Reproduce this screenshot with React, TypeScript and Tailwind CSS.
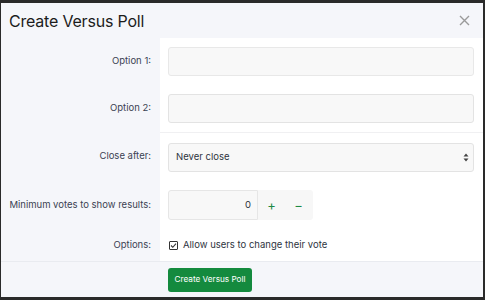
import React from "react";

const font = { fontFamily: "Inter, 'Noto Sans', sans-serif" };

function Label({ children }: { children: React.ReactNode }) {
  return (
    <div className="w-[159px] shrink-0 self-stretch flex items-center justify-end pr-[9px] text-[9.5px] text-[#3b4252] bg-[#f5f6fa]">
      {children}
    </div>
  );
}

export default function App() {
  return (
    <div className="w-[485px] h-[300px] bg-[#2a2a2a] pt-[3px] pl-[1px]" style={font}>
      <div className="w-[482px] h-[294px] bg-[#f5f6fa] flex flex-col">
        <div className="h-[35px] flex items-center justify-between pl-[8px] pr-[13px]">
          <div className="text-[16px] text-[#1c1c1c] tracking-[-0.2px]">Create Versus Poll</div>
          <svg width="11" height="11" viewBox="0 0 11 11" className="text-[#9a9a9a]">
            <path d="M1 1 L10 10 M10 1 L1 10" stroke="currentColor" strokeWidth="1.4" />
          </svg>
        </div>
        <div className="flex flex-col">
          <div className="flex h-[46px]">
            <Label>Option 1:</Label>
            <div className="flex-1 bg-white flex items-center pl-[8px] pr-[9px]">
              <div className="w-full h-[29px] rounded-[3px] border border-[#e8e8e8] bg-[#f8f8f8]" />
            </div>
          </div>
          <div className="flex h-[48px]">
            <Label>Option 2:</Label>
            <div className="flex-1 bg-white flex items-center pl-[8px] pr-[9px]">
              <div className="w-full h-[29px] rounded-[3px] border border-[#e3e3e3] bg-[#f8f8f8]" />
            </div>
          </div>
          <div className="flex h-[49px]">
            <Label>Close after:</Label>
            <div className="flex-1 bg-white flex items-center pl-[8px] pr-[9px] border-t border-[#f0f0f2]">
              <div className="w-full h-[29px] rounded-[3px] border border-[#e3e3e3] bg-[#f8f8f8] flex items-center justify-between pl-[7px] pr-[4px] text-[9.5px] text-[#2e3440]">
                <span>Never close</span>
                <svg width="6" height="9" viewBox="0 0 6 9">
                  <path d="M3 0.5 L5.5 3.5 L0.5 3.5 Z M3 8.5 L5.5 5.5 L0.5 5.5 Z" fill="#444" />
                </svg>
              </div>
            </div>
          </div>
          <div className="flex h-[48px]">
            <Label>Minimum votes to show results:</Label>
            <div className="flex-1 bg-white flex items-center pl-[8px] pr-[9px]">
              <div className="flex h-[30px]">
                <div className="w-[90px] h-full rounded-l-[3px] border border-[#e6e6e6] bg-[#f8f8f8] flex items-center justify-end pr-[6px] text-[9.5px] text-[#2e3440]">
                  0
                </div>
                <div className="w-[55px] h-full bg-[#f7f7f7] rounded-r-[3px] flex items-center text-[#1e8a45]">
                  <span className="w-[27px] text-center text-[13px] leading-none">+</span>
                  <span className="w-[27px] text-center text-[13px] leading-none">−</span>
                </div>
              </div>
            </div>
          </div>
          <div className="flex h-[32px]">
            <Label>Options:</Label>
            <div className="flex-1 bg-white flex items-center pl-[9px] gap-[5px] text-[9.5px] text-[#2e3440]">
              <svg width="9" height="9" viewBox="0 0 9 9">
                <rect x="0.5" y="0.5" width="8" height="8" rx="0.5" fill="none" stroke="#333" strokeWidth="1" />
                <path d="M2 4.5 L3.8 6.3 L7 2.6" fill="none" stroke="#333" strokeWidth="1.1" />
              </svg>
              <span>Allow users to change their vote</span>
            </div>
          </div>
        </div>
        <div className="flex-1 border-t border-[#e9ebf0] flex items-center pl-[167px]">
          <div className="h-[24px] w-[84px] justify-center rounded-[3px] bg-[#148a3e] text-white text-[8.2px] flex items-center">
            Create Versus Poll
          </div>
        </div>
      </div>
    </div>
  );
}
